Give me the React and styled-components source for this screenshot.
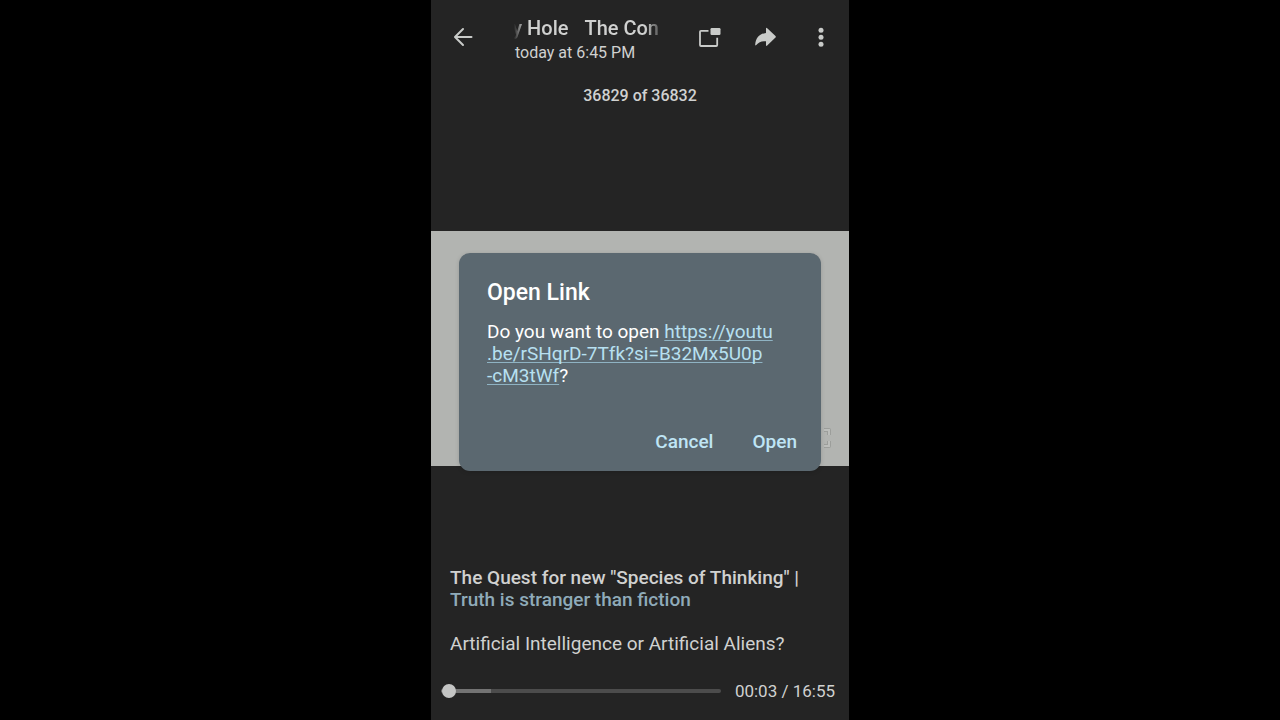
import React, { useState } from 'react';
import styled, { createGlobalStyle } from 'styled-components';

const GlobalStyle = createGlobalStyle`
  body {
    margin: 0;
    background: #000;
    font-family: Roboto, sans-serif;
  }

  *, *::before, *::after {
    box-sizing: border-box;
  }
`;

const Player = styled.main`
  position: relative;
  display: flex;
  flex-direction: column;
  max-width: 418px;
  min-height: 100vh;
  margin: 0 auto;
  background: #242424;
  color: #d0d1d0;
`;

const Header = styled.header`
  display: flex;
  align-items: center;
  height: 74px;
  padding: 0 16px 0 20px;
`;

const IconButton = styled.button`
  display: block;
  width: 24px;
  height: 24px;
  padding: 0;
  border: none;
  background: none;
  color: #c9cbc9;
  cursor: pointer;

  svg {
    display: block;
  }
`;

const TitleBlock = styled.div`
  flex: 1;
  min-width: 0;
  margin: 0 38px 0 36px;
  padding-top: 7px;
`;

const Title = styled.h1`
  display: flex;
  justify-content: flex-end;
  gap: 16px;
  margin: 0;
  font-size: 20px;
  font-weight: 500;
  line-height: 24px;
  white-space: nowrap;
  mask-image: linear-gradient(to right, transparent 3px, #000 13px, #000 calc(100% - 14px), rgba(0, 0, 0, 0.3));
`;

const Subtitle = styled.div`
  padding-left: 4px;
  font-size: 16px;
  line-height: 26px;
  white-space: nowrap;
`;

const Actions = styled.div`
  display: flex;
  gap: 32px;
`;

const Counter = styled.div`
  padding: 12px 0 24px;
  font-size: 16px;
  font-weight: 500;
  line-height: 20px;
  text-align: center;
`;

const Stage = styled.div`
  display: flex;
  flex: 1;
  align-items: center;
`;

const Video = styled.div`
  display: flex;
  align-items: flex-end;
  justify-content: flex-end;
  width: 100%;
  aspect-ratio: 16 / 9;
  padding: 16px;
  background: #b2b4b1;
`;

const Caption = styled.div`
  padding: 0 19px;
  font-size: 19px;
  line-height: 22px;

  p {
    margin: 0 0 22px;
  }

  p:last-child {
    margin-bottom: 0;
  }
`;

const CaptionTitle = styled.strong`
  display: block;
  font-weight: 500;
`;

const CaptionLink = styled.a`
  color: #8fabb9;
  font-weight: 500;
  text-decoration: none;
`;

const Controls = styled.div`
  display: flex;
  align-items: center;
  gap: 14px;
  margin-top: 24px;
  padding: 0 14px 17px 10px;
`;

const SeekBar = styled.input`
  flex: 1;
  min-width: 0;
  height: 24px;
  margin: 0;
  appearance: none;
  background: none;

  &::-webkit-slider-runnable-track {
    height: 4px;
    border-radius: 2px;
    background: linear-gradient(to right, #737373 18%, #4c4c4c 18%);
  }

  &::-webkit-slider-thumb {
    appearance: none;
    width: 14px;
    height: 14px;
    margin-top: -5px;
    border-radius: 50%;
    background: #c4c5c4;
  }
`;

const Time = styled.span`
  font-size: 17px;
  line-height: 24px;
  white-space: nowrap;
`;

const Overlay = styled.div`
  position: absolute;
  inset: 0;
  display: flex;
  align-items: center;
  justify-content: center;
  padding: 3px 28px 0;
`;

const Dialog = styled.section`
  width: 100%;
  padding: 26px 8px 11px 28px;
  border-radius: 11px;
  background: #5b6870;
  box-shadow: 0 1px 4px rgba(0, 0, 0, 0.15);
  color: #fff;
`;

const DialogTitle = styled.h2`
  margin: 0 0 14px;
  font-size: 23px;
  font-weight: 500;
  line-height: 28px;
`;

const DialogText = styled.p`
  margin: 0 36px 37px 0;
  font-size: 19px;
  line-height: 22px;
`;

const DialogLink = styled.a`
  color: #b7e0f1;
  text-decoration: underline;
  text-decoration-color: #8fb3c3;
  text-decoration-thickness: 1px;
  text-underline-offset: 2px;
  text-decoration-skip-ink: none;
`;

const DialogActions = styled.div`
  display: flex;
  justify-content: flex-end;
  gap: 7px;
`;

const DialogButton = styled.button`
  height: 36px;
  padding: 0 16px;
  border: none;
  background: none;
  color: #bfe5f5;
  font-family: inherit;
  font-size: 19px;
  font-weight: 500;
  cursor: pointer;
`;

const BackIcon = () => (
  <svg width="24" height="24" viewBox="0 0 24 24" fill="none" stroke="currentColor" strokeWidth="2" strokeLinecap="round" strokeLinejoin="round">
    <path d="M20.500 12H4.200M12 4L4 12L12 20" />
  </svg>
);

const PipIcon = () => (
  <svg width="24" height="24" viewBox="0 0 24 24">
    <path d="M11.500 5.800H4Q3 5.800 3 6.800V20Q3 21 4 21H19.200Q20.200 21 20.200 20V12.700" fill="none" stroke="currentColor" strokeWidth="1.800" />
    <rect x="13.500" y="3" width="10" height="7" rx="1.200" fill="currentColor" />
  </svg>
);

const ShareIcon = () => (
  <svg width="24" height="24" viewBox="0 0 24 24" fill="currentColor">
    <path d="M13 3.700Q13 2.200 14.200 3.200L22.500 11.100Q23.200 11.900 22.500 12.600L14.200 20.500Q13 21.500 13 20V16.200C8.800 16.200 5.800 17.200 3.300 19.900Q2 21.100 2.200 19.400C2.900 12.900 6.500 8.800 13 8Z" />
  </svg>
);

const MoreIcon = () => (
  <svg width="24" height="24" viewBox="0 0 24 24" fill="currentColor">
    <circle cx="12" cy="5.200" r="2.500" />
    <circle cx="12" cy="12.200" r="2.500" />
    <circle cx="12" cy="19.200" r="2.500" />
  </svg>
);

const FullscreenIcon = () => (
  <svg width="24" height="24" viewBox="0 0 24 24" fill="none">
    <path d="M4 9V4H9M15 4H20V9M20 15V20H15M9 20H4V15" stroke="#9c9e9b" strokeWidth="4" strokeLinejoin="round" />
    <path d="M4 9V4H9M15 4H20V9M20 15V20H15M9 20H4V15" stroke="#bcbebb" strokeWidth="2" />
  </svg>
);

const LINK = 'https://youtu.be/rSHqrD-7Tfk?si=B32Mx5U0p-cM3tWf';
const LINK_LINES = ['https://youtu', '.be/rSHqrD-7Tfk?si=B32Mx5U0p', '-cM3tWf'];

const App = () => {
  const [position, setPosition] = useState(3);
  const [isDialogOpen, setIsDialogOpen] = useState(true);

  const closeDialog = () => setIsDialogOpen(false);

  return (
    <>
      <GlobalStyle />
      <Player>
        <Header>
          <IconButton aria-label="Back"><BackIcon /></IconButton>
          <TitleBlock>
            <Title>
              <span>y Hole</span>
              <span>The Con</span>
            </Title>
            <Subtitle>today at 6:45 PM</Subtitle>
          </TitleBlock>
          <Actions>
            <IconButton aria-label="Picture in picture"><PipIcon /></IconButton>
            <IconButton aria-label="Share"><ShareIcon /></IconButton>
            <IconButton aria-label="More"><MoreIcon /></IconButton>
          </Actions>
        </Header>
        <Counter>36829 of 36832</Counter>
        <Stage>
          <Video>
            <IconButton aria-label="Fullscreen"><FullscreenIcon /></IconButton>
          </Video>
        </Stage>
        <Caption>
          <p>
            <CaptionTitle>The Quest for new "Species of Thinking" |</CaptionTitle>
            <CaptionLink href={LINK}>Truth is stranger than fiction</CaptionLink>
          </p>
          <p>Artificial Intelligence or Artificial Aliens?</p>
        </Caption>
        <Controls>
          <SeekBar
            type="range"
            aria-label="Seek"
            min="0"
            max="1015"
            value={position}
            onChange={(e) => setPosition(Number(e.target.value))}
          />
          <Time>00:03 / 16:55</Time>
        </Controls>
        {isDialogOpen && (
          <Overlay>
            <Dialog role="dialog" aria-labelledby="open-link-title">
              <DialogTitle id="open-link-title">Open Link</DialogTitle>
              <DialogText>
                Do you want to open{' '}
                <DialogLink href={LINK}>
                  {LINK_LINES[0]}<br />
                  {LINK_LINES[1]}<br />
                  {LINK_LINES[2]}
                </DialogLink>
                ?
              </DialogText>
              <DialogActions>
                <DialogButton onClick={closeDialog}>Cancel</DialogButton>
                <DialogButton onClick={closeDialog}>Open</DialogButton>
              </DialogActions>
            </Dialog>
          </Overlay>
        )}
      </Player>
    </>
  );
};

export default App;
